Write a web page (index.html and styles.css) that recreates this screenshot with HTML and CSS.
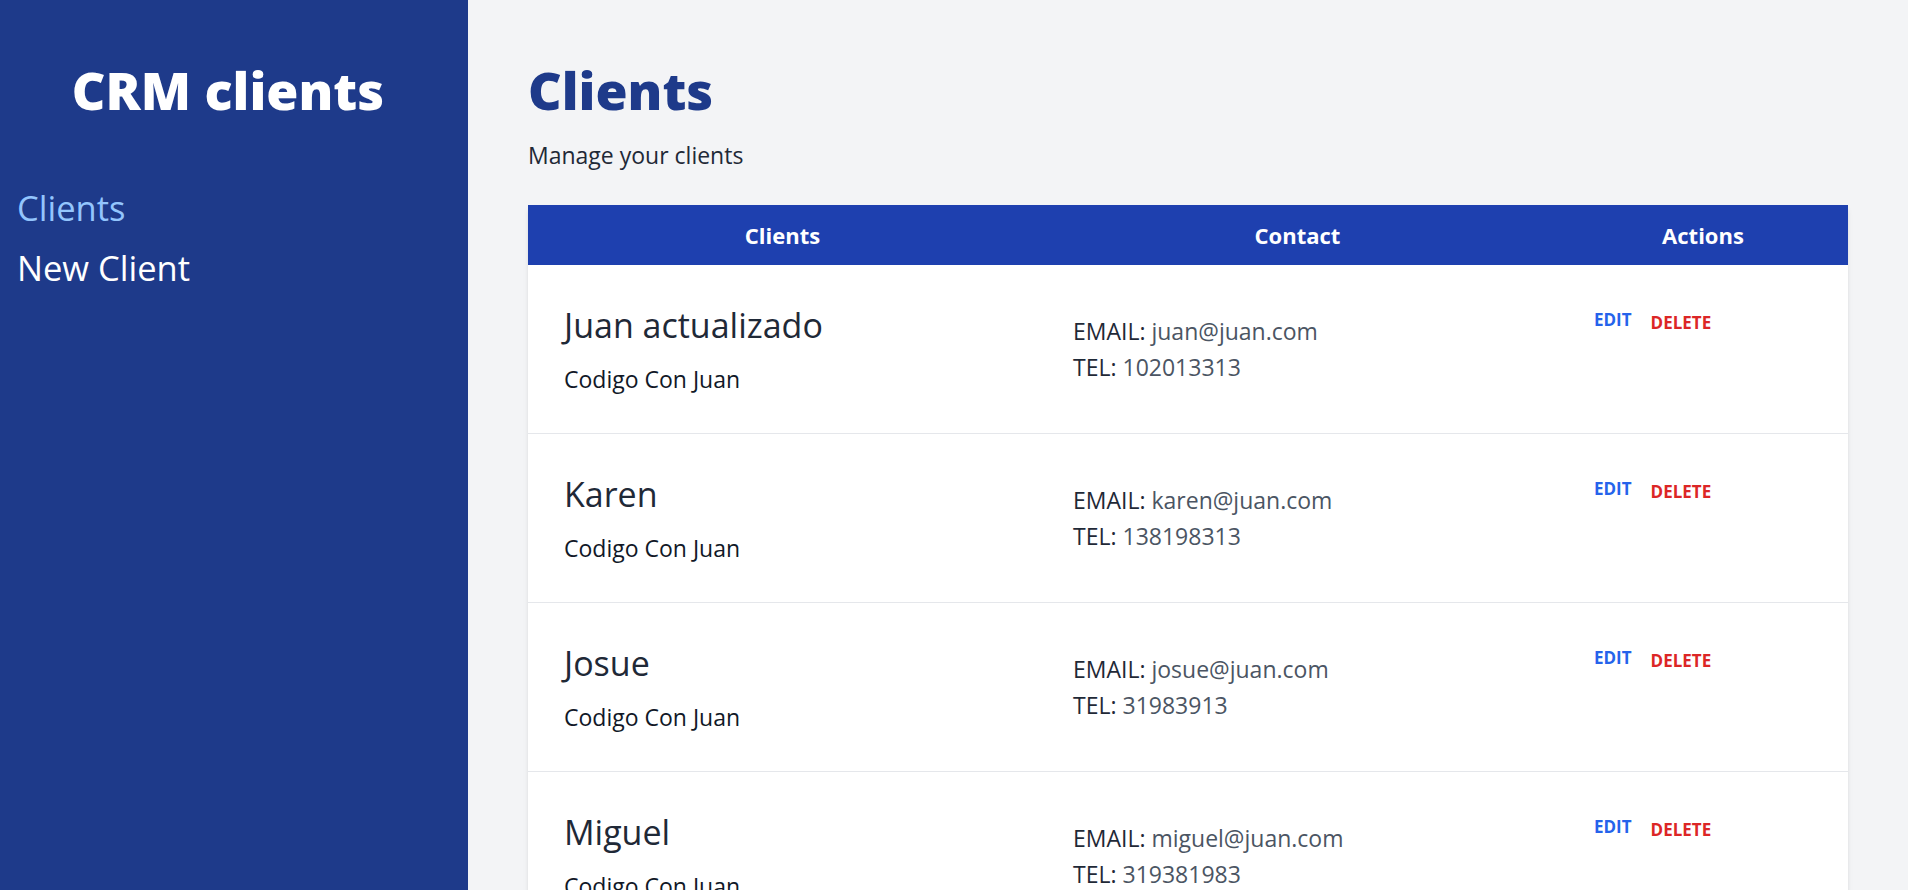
FILE: index.html
```html
<!DOCTYPE html>
<html lang="en">
<head>
<meta charset="utf-8">
<title>CRM clients</title>
<link rel="stylesheet" href="styles.css">
</head>
<body>
<div class="layout">
  <aside class="sidebar">
    <h1 class="brand">CRM clients</h1>
    <nav class="nav">
      <a class="nav-link active" href="#">Clients</a>
      <a class="nav-link" href="#">New Client</a>
    </nav>
  </aside>
  <main class="main">
    <h2 class="page-title">Clients</h2>
    <p class="page-sub">Manage your clients</p>
    <table class="clients">
      <colgroup>
        <col class="c-name">
        <col class="c-contact">
        <col class="c-actions">
      </colgroup>
      <thead>
        <tr><th>Clients</th><th>Contact</th><th>Actions</th></tr>
      </thead>
      <tbody>
        <tr>
          <td class="cell-name"><p class="name">Juan actualizado</p><p class="company">Codigo Con Juan</p></td>
          <td class="cell-contact"><p><span class="lbl">EMAIL:</span> juan@juan.com</p><p><span class="lbl">TEL:</span> 102013313</p></td>
          <td class="cell-actions"><div class="actions"><button class="btn-edit">Edit</button><button class="btn-delete">Delete</button></div></td>
        </tr>
        <tr>
          <td class="cell-name"><p class="name">Karen</p><p class="company">Codigo Con Juan</p></td>
          <td class="cell-contact"><p><span class="lbl">EMAIL:</span> karen@juan.com</p><p><span class="lbl">TEL:</span> 138198313</p></td>
          <td class="cell-actions"><div class="actions"><button class="btn-edit">Edit</button><button class="btn-delete">Delete</button></div></td>
        </tr>
        <tr>
          <td class="cell-name"><p class="name">Josue</p><p class="company">Codigo Con Juan</p></td>
          <td class="cell-contact"><p><span class="lbl">EMAIL:</span> josue@juan.com</p><p><span class="lbl">TEL:</span> 31983913</p></td>
          <td class="cell-actions"><div class="actions"><button class="btn-edit">Edit</button><button class="btn-delete">Delete</button></div></td>
        </tr>
        <tr>
          <td class="cell-name"><p class="name">Miguel</p><p class="company">Codigo Con Juan</p></td>
          <td class="cell-contact"><p><span class="lbl">EMAIL:</span> miguel@juan.com</p><p><span class="lbl">TEL:</span> 319381983</p></td>
          <td class="cell-actions"><div class="actions"><button class="btn-edit">Edit</button><button class="btn-delete">Delete</button></div></td>
        </tr>
      </tbody>
    </table>
  </main>
</div>
</body>
</html>
```
FILE: styles.css
```css
* { box-sizing: border-box; }
html, body { margin: 0; padding: 0; height: 100%; overflow: hidden; }
body { font-family: "Open Sans", "Noto Sans", sans-serif; color: #111827; }
p { margin: 0; }

.layout { display: flex; height: 100vh; }

.sidebar {
  width: 468px;
  flex: none;
  background: #1e3a8a;
  padding: 60px 17px 0;
}
.brand {
  margin: 0;
  text-align: center;
  color: #fff;
  font-size: 52px;
  font-weight: 800;
  line-height: 60px;
  padding-right: 12px;
}
.nav { display: flex; flex-direction: column; margin-top: 58px; }
.nav-link {
  font-size: 34.5px;
  line-height: 60px;
  color: #fff;
  text-decoration: none;
  font-weight: 400;
}
.nav-link.active { color: #93c5fd; }

.main {
  flex: 1;
  background: #f3f4f6;
  padding: 60px 60px 0;
  overflow: hidden;
}
.page-title {
  margin: 0;
  color: #1e3a8a;
  font-size: 52px;
  font-weight: 800;
  line-height: 60px;
}
.page-sub {
  margin-top: 17px;
  font-size: 23px;
  line-height: 36px;
  color: #1f2937;
}

.clients {
  margin-top: 32px;
  width: 1320px;
  table-layout: fixed;
  border-collapse: collapse;
  background: #fff;
  box-shadow: 0 4px 6px -1px rgba(0,0,0,0.1), 0 2px 4px -2px rgba(0,0,0,0.1);
}
.c-name { width: 509px; }
.c-contact { width: 521px; }
.c-actions { width: 290px; }

.clients thead { background: #1e40af; color: #fff; }
.clients th {
  height: 60px;
  padding: 0;
  font-size: 22px;
  font-weight: 700;
  text-align: center;
}
.clients td {
  padding: 36px;
  border-bottom: 1px solid #e5e7eb;
  vertical-align: middle;
}
.name { font-size: 34px; line-height: 48px; color: #1f2937; }
.company { margin-top: 12px; font-size: 23px; line-height: 36px; color: #111827; }
.cell-contact p { font-size: 23px; line-height: 36px; color: #4b5563; }
.lbl { color: #1f2937; }
.clients td.cell-actions { vertical-align: top; padding-top: 43px; }
.actions { display: flex; align-items: flex-start; gap: 19px; }
.actions button {
  border: 0; background: none; padding: 0; margin: 0;
  font-family: inherit;
  font-size: 17px;
  font-weight: 700;
  text-transform: uppercase;
  line-height: 24px;
  cursor: pointer;
}
.btn-edit { color: #2563eb; }
.actions .btn-delete { color: #dc2626; margin-top: 3px; }
```
